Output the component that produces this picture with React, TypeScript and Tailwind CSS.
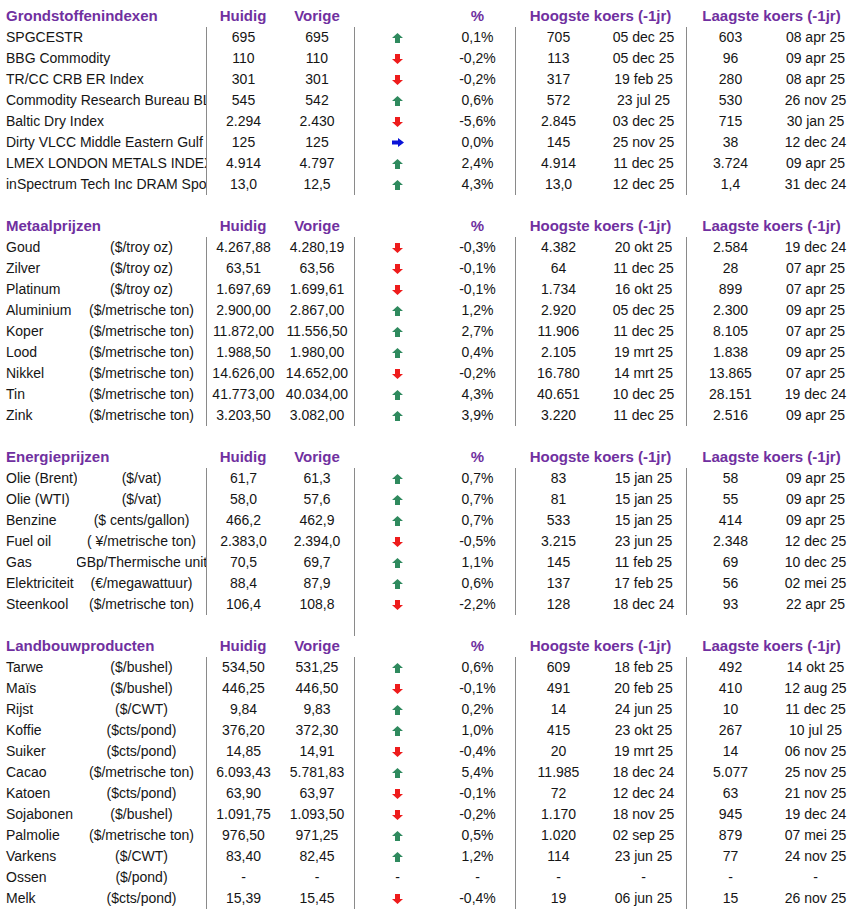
type Dir = "up" | "down" | "flat" | "none";
type Row = [string, string, string, string, Dir, string, string, string, string, string];

const grondstoffen: Row[] = [
  ["SPGCESTR", "", "695", "695", "up", "0,1%", "705", "05 dec 25", "603", "08 apr 25"],
  ["BBG Commodity", "", "110", "110", "down", "-0,2%", "113", "05 dec 25", "96", "09 apr 25"],
  ["TR/CC CRB ER Index", "", "301", "301", "down", "-0,2%", "317", "19 feb 25", "280", "08 apr 25"],
  ["Commodity Research Bureau BLS/US Spot All Commodities", "", "545", "542", "up", "0,6%", "572", "23 jul 25", "530", "26 nov 25"],
  ["Baltic Dry Index", "", "2.294", "2.430", "down", "-5,6%", "2.845", "03 dec 25", "715", "30 jan 25"],
  ["Dirty VLCC Middle Eastern Gulf", "", "125", "125", "flat", "0,0%", "145", "25 nov 25", "38", "12 dec 24"],
  ["LMEX LONDON METALS INDEX", "", "4.914", "4.797", "up", "2,4%", "4.914", "11 dec 25", "3.724", "09 apr 25"],
  ["inSpectrum Tech Inc DRAM Spot", "", "13,0", "12,5", "up", "4,3%", "13,0", "12 dec 25", "1,4", "31 dec 24"],
];

const metalen: Row[] = [
  ["Goud", "($/troy oz)", "4.267,88", "4.280,19", "down", "-0,3%", "4.382", "20 okt 25", "2.584", "19 dec 24"],
  ["Zilver", "($/troy oz)", "63,51", "63,56", "down", "-0,1%", "64", "11 dec 25", "28", "07 apr 25"],
  ["Platinum", "($/troy oz)", "1.697,69", "1.699,61", "down", "-0,1%", "1.734", "16 okt 25", "899", "07 apr 25"],
  ["Aluminium", "($/metrische ton)", "2.900,00", "2.867,00", "up", "1,2%", "2.920", "05 dec 25", "2.300", "09 apr 25"],
  ["Koper", "($/metrische ton)", "11.872,00", "11.556,50", "up", "2,7%", "11.906", "11 dec 25", "8.105", "07 apr 25"],
  ["Lood", "($/metrische ton)", "1.988,50", "1.980,00", "up", "0,4%", "2.105", "19 mrt 25", "1.838", "09 apr 25"],
  ["Nikkel", "($/metrische ton)", "14.626,00", "14.652,00", "down", "-0,2%", "16.780", "14 mrt 25", "13.865", "07 apr 25"],
  ["Tin", "($/metrische ton)", "41.773,00", "40.034,00", "up", "4,3%", "40.651", "10 dec 25", "28.151", "19 dec 24"],
  ["Zink", "($/metrische ton)", "3.203,50", "3.082,00", "up", "3,9%", "3.220", "11 dec 25", "2.516", "09 apr 25"],
];

const energie: Row[] = [
  ["Olie (Brent)", "($/vat)", "61,7", "61,3", "up", "0,7%", "83", "15 jan 25", "58", "09 apr 25"],
  ["Olie (WTI)", "($/vat)", "58,0", "57,6", "up", "0,7%", "81", "15 jan 25", "55", "09 apr 25"],
  ["Benzine", "($ cents/gallon)", "466,2", "462,9", "up", "0,7%", "533", "15 jan 25", "414", "09 apr 25"],
  ["Fuel oil", "( ¥/metrische ton)", "2.383,0", "2.394,0", "down", "-0,5%", "3.215", "23 jun 25", "2.348", "12 dec 25"],
  ["Gas", "(GBp/Thermische unit)", "70,5", "69,7", "up", "1,1%", "145", "11 feb 25", "69", "10 dec 25"],
  ["Elektriciteit", "(€/megawattuur)", "88,4", "87,9", "up", "0,6%", "137", "17 feb 25", "56", "02 mei 25"],
  ["Steenkool", "($/metrische ton)", "106,4", "108,8", "down", "-2,2%", "128", "18 dec 24", "93", "22 apr 25"],
];

const landbouw: Row[] = [
  ["Tarwe", "($/bushel)", "534,50", "531,25", "up", "0,6%", "609", "18 feb 25", "492", "14 okt 25"],
  ["Maïs", "($/bushel)", "446,25", "446,50", "down", "-0,1%", "491", "20 feb 25", "410", "12 aug 25"],
  ["Rijst", "($/CWT)", "9,84", "9,83", "up", "0,2%", "14", "24 jun 25", "10", "11 dec 25"],
  ["Koffie", "($cts/pond)", "376,20", "372,30", "up", "1,0%", "415", "23 okt 25", "267", "10 jul 25"],
  ["Suiker", "($cts/pond)", "14,85", "14,91", "down", "-0,4%", "20", "19 mrt 25", "14", "06 nov 25"],
  ["Cacao", "($/metrische ton)", "6.093,43", "5.781,83", "up", "5,4%", "11.985", "18 dec 24", "5.077", "25 nov 25"],
  ["Katoen", "($cts/pond)", "63,90", "63,97", "down", "-0,1%", "72", "12 dec 24", "63", "21 nov 25"],
  ["Sojabonen", "($/bushel)", "1.091,75", "1.093,50", "down", "-0,2%", "1.170", "18 nov 25", "945", "19 dec 24"],
  ["Palmolie", "($/metrische ton)", "976,50", "971,25", "up", "0,5%", "1.020", "02 sep 25", "879", "07 mei 25"],
  ["Varkens", "($/CWT)", "83,40", "82,45", "up", "1,2%", "114", "23 jun 25", "77", "24 nov 25"],
  ["Ossen", "($/pond)", "-", "-", "none", "-", "-", "-", "-", "-"],
  ["Melk", "($cts/pond)", "15,39", "15,45", "down", "-0,4%", "19", "06 jun 25", "15", "26 nov 25"],
];

const line = "border-l border-[#8a8a8a]";
const cell = "flex h-[21px] items-center justify-center whitespace-nowrap overflow-hidden";

function Arrow({ dir }: { dir: Dir }) {
  if (dir === "none") return <span>-</span>;
  if (dir === "flat")
    return (
      <svg width="12" height="9" viewBox="0 0 12 9">
        <path d="M0 2.5h6V0l6 4.5L6 9V6.5H0z" fill="#0a14d8" />
      </svg>
    );
  if (dir === "up")
    return (
      <svg width="11" height="10" viewBox="0 0 11 10">
        <path d="M5.5 0L11 5H8v5H3V5H0z" fill="#2f8a5e" />
      </svg>
    );
  return (
    <svg width="11" height="10" viewBox="0 0 11 10">
      <path d="M3 0h5v5h3l-5.5 5L0 5h3z" fill="#ee1c1c" />
    </svg>
  );
}

function Section({
  title,
  rows,
  wideNames,
  tailLine,
}: {
  title: string;
  rows: Row[];
  wideNames?: boolean;
  tailLine?: boolean;
}) {
  return (
    <>
      {/* header */}
      <div className="col-span-2 flex h-[21px] items-center pl-1.5 text-[15px] font-bold text-[#7030a0] whitespace-nowrap">
        {title}
      </div>
      <div className={`${cell} text-[15px] font-bold text-[#7030a0]`}>Huidig</div>
      <div className={`${cell} text-[15px] font-bold text-[#7030a0]`}>Vorige</div>
      <div className={cell}></div>
      <div className={`${cell} text-[15px] font-bold text-[#7030a0]`}>%</div>
      <div className={`${cell} col-span-2 text-[15px] font-bold text-[#7030a0]`}>Hoogste koers (-1jr)</div>
      <div className={`${cell} col-span-2 text-[15px] font-bold text-[#7030a0]`}>Laagste koers (-1jr)</div>

      {rows.map((r) => (
        <div key={r[0]} className="contents">
          {wideNames ? (
            <div className="col-span-2 flex h-[21px] items-center overflow-hidden whitespace-nowrap pl-1.5">{r[0]}</div>
          ) : (
            <>
              <div className="flex h-[21px] items-center overflow-hidden whitespace-nowrap pl-1.5">{r[0]}</div>
              <div className={cell}>{r[1]}</div>
            </>
          )}
          <div className={`${cell} ${line}`}>{r[2]}</div>
          <div className={cell}>{r[3]}</div>
          <div className={`${cell} ${line}`}>
            <Arrow dir={r[4]} />
          </div>
          <div className={cell}>{r[5]}</div>
          <div className={`${cell} ${line}`}>{r[6]}</div>
          <div className={cell}>{r[7]}</div>
          <div className={`${cell} ${line}`}>{r[8]}</div>
          <div className={cell}>{r[9]}</div>
        </div>
      ))}

      {/* spacer row */}
      <div className="col-span-4 h-[21px]"></div>
      <div className={`col-span-6 h-[21px] ${tailLine ? line : ""}`}></div>
    </>
  );
}

export default function App() {
  return (
    <div className="min-h-screen bg-white pt-1.5 font-['Liberation_Sans',Arial,sans-serif] text-[14px] text-[#151515]">
      <div className="grid w-[857px] grid-cols-[77px_129px_74px_74px_86px_75px_86px_85px_88px_83px]">
        <Section title="Grondstoffenindexen" rows={grondstoffen} wideNames />
        <Section title="Metaalprijzen" rows={metalen} />
        <Section title="Energieprijzen" rows={energie} tailLine />
        <Section title="Landbouwproducten" rows={landbouw} />
      </div>
    </div>
  );
}
